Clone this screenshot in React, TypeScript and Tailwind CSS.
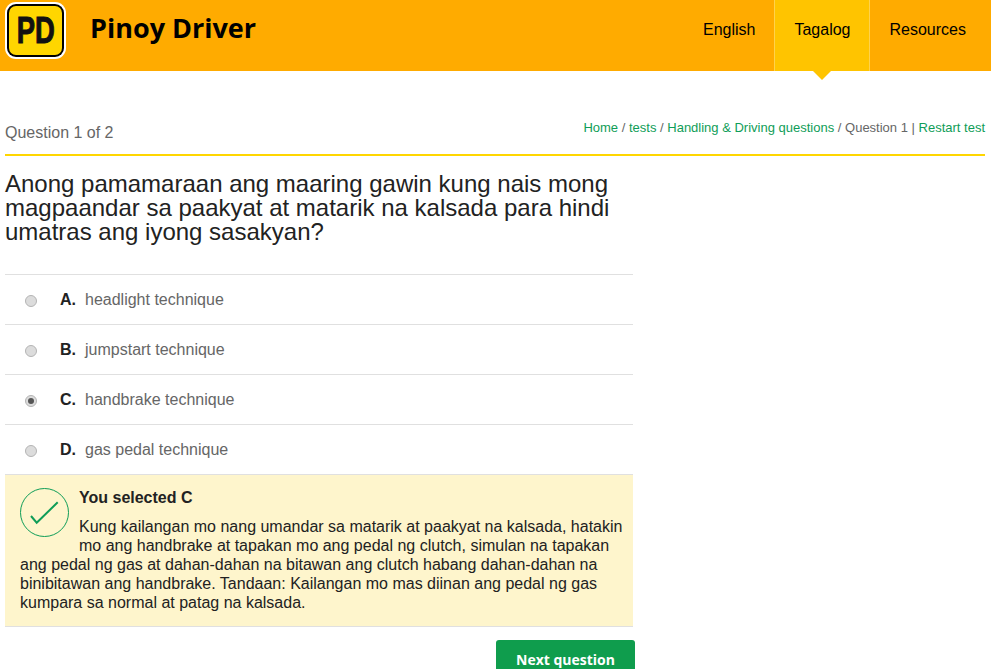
const options = [
  { letter: "A.", text: "headlight technique" },
  { letter: "B.", text: "jumpstart technique" },
  { letter: "C.", text: "handbrake technique", checked: true },
  { letter: "D.", text: "gas pedal technique" },
];

function Logo() {
  return (
    <div className="w-[61px] h-[57px] bg-white rounded-[11px] p-[2px] mt-[2px]">
      <div className="w-full h-full bg-black rounded-[9px] p-[2px]">
        <div className="w-full h-full bg-[#ffd600] rounded-[7px] flex items-center justify-center">
          <span className="font-['Liberation_Sans',sans-serif] font-bold text-[37px] leading-none text-[#111] scale-x-[0.74] [-webkit-text-stroke:1px_#111]">
            PD
          </span>
        </div>
      </div>
    </div>
  );
}

export default function App() {
  return (
    <main className="h-[669px] overflow-hidden bg-white font-['Liberation_Sans',Arial,sans-serif] text-[#222]">
      <header className="h-[71px] bg-[#ffab00] flex justify-between">
        <div className="flex items-start pl-[5px]">
          <Logo />
          <span className="ml-[24px] mt-[9px] font-['Open_Sans',sans-serif] font-bold text-[27px] leading-[38px] text-black">
            Pinoy Driver
          </span>
        </div>
        <nav className="flex text-base text-black">
          <a className="h-[71px] pt-[20px] pl-[20px] pr-[19px] leading-[20px]">English</a>
          <a className="relative h-[71px] pt-[20px] pl-[19px] pr-[18px] leading-[20px] bg-[#ffc400] border-x border-[#ffd24d]">
            Tagalog
            <span className="absolute left-[38px] top-[71px] w-0 h-0 border-x-[9px] border-x-transparent border-t-[9px] border-t-[#ffc400]" />
          </a>
          <a className="h-[71px] pt-[20px] pl-[20px] pr-[25px] leading-[20px]">Resources</a>
        </nav>
      </header>

      <div className="px-[5px] pr-[6px]">
        <div className="flex justify-between items-start h-[85px] border-b-2 border-[#ffd600] pt-[49px]">
          <span className="text-base leading-[20px] mt-[3px] text-[#666]">Question 1 of 2</span>
          <span className="text-[13px] leading-[16px] text-[#666]">
            <a className="text-[#0f9d58]">Home</a> / <a className="text-[#0f9d58]">tests</a> /{" "}
            <a className="text-[#0f9d58]">Handling &amp; Driving questions</a> / Question 1 |{" "}
            <a className="text-[#0f9d58]">Restart test</a>
          </span>
        </div>

        <div className="w-[628px]">
          <h1 className="text-[24px] leading-[24px] mt-[16px] mb-[30px] text-[#222]">
            Anong pamamaraan ang maaring gawin kung nais mong magpaandar sa paakyat at matarik na kalsada para hindi
            umatras ang iyong sasakyan?
          </h1>

          <ul>
            {options.map((o) => (
              <li key={o.letter} className="h-[50px] border-t border-[#e0e0e0] flex items-center pl-[20px]">
                <span className="w-[12px] h-[12px] mt-[3px] rounded-full border border-[#b4b4b4] bg-[#dcdcdc] flex items-center justify-center">
                  {o.checked && <span className="w-[6px] h-[6px] rounded-full bg-[#555]" />}
                </span>
                <b className="ml-[23px] w-[25px] text-base text-[#222]">{o.letter}</b>
                <span className="text-base text-[#666]">{o.text}</span>
              </li>
            ))}
          </ul>

          <div className="h-[153px] bg-[#fef5cc] border-y border-[#e0e0e0] pt-[13px] pl-[15px] pr-[10px] text-base leading-[19px]">
            <svg className="float-left w-[49px] h-[49px] mr-[10px] mb-[6px]" viewBox="0 0 49 49" fill="none">
              <circle cx="24.5" cy="24.5" r="24" stroke="#0f9d58" />
              <path d="M11 28l5.700 6.700L37.700 14.300" stroke="#0f9d58" strokeWidth="2" />
            </svg>
            <b className="block text-[#222] mb-[10px]">You selected C</b>
            <p>
              Kung kailangan mo nang umandar sa matarik at paakyat na kalsada, hatakin mo ang handbrake at tapakan mo
              ang pedal ng clutch, simulan na tapakan ang pedal ng gas at dahan-dahan na bitawan ang clutch habang
              dahan-dahan na binibitawan ang handbrake. Tandaan: Kailangan mo mas diinan ang pedal ng gas kumpara sa
              normal at patag na kalsada.
            </p>
          </div>

          <div className="flex justify-end mt-[13px] -mr-[2px]">
            <button className="w-[139px] h-[40px] pb-[2px] bg-[#0f9d4d] rounded-[3px] text-white font-['Open_Sans',sans-serif] font-bold text-[14px]">
              Next question
            </button>
          </div>
        </div>
      </div>
    </main>
  );
}
